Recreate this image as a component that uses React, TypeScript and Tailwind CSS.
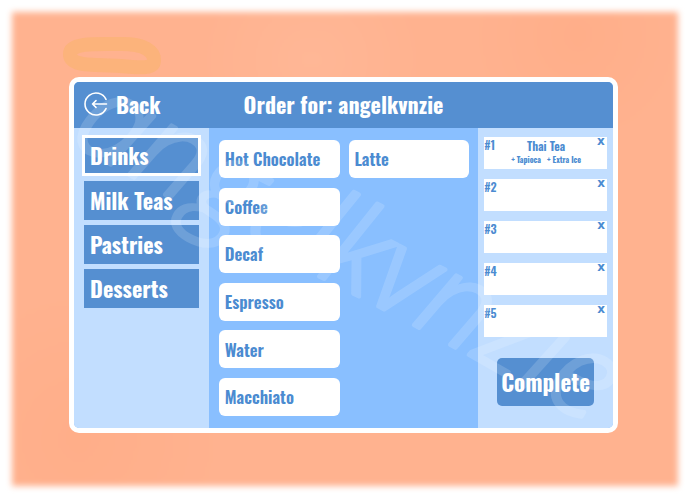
import { useState } from 'react';

interface OrderItem {
  name: string;
  extras: string[];
}

const categories = ['Drinks', 'Milk Teas', 'Pastries', 'Desserts'];

const menu = ['Hot Chocolate', 'Coffee', 'Decaf', 'Espresso', 'Water', 'Macchiato', 'Latte'];

const initialOrder: (OrderItem | null)[] = [
  { name: 'Thai Tea', extras: ['Tapioca', 'Extra Ice'] },
  null,
  null,
  null,
  null,
];

function BackIcon() {
  return (
    <svg viewBox="0 0 24 24" className="size-6" fill="none" stroke="currentColor" strokeWidth="1.6" strokeLinecap="round" strokeLinejoin="round" aria-hidden="true">
      <path d="M22 7.4A11 11 0 1 0 22 16.6" />
      <path d="M22.5 12H8.5M12 8.6 8.5 12l3.5 3.4" />
    </svg>
  );
}

function Signature() {
  return (
    <svg viewBox="0 0 690 498" className="pointer-events-none absolute inset-0 h-full w-full" aria-hidden="true">
      <path
        d="M70 54C70 42 100 44 122 44S154 51 154 60S142 68 120 66S70 68 70 54Z"
        fill="none"
        stroke="#f8b35c"
        strokeOpacity="0.4"
        strokeWidth="14"
        strokeLinecap="round"
      />
      <defs>
        <path id="signature-line" d="M68 140Q210 222 350 292T680 480" />
      </defs>
      <text
        fill="white"
        stroke="white"
        strokeWidth="4"
        strokeLinejoin="round"
        opacity="0.15"
        fontSize="120"
        fontStyle="italic"
        fontWeight="300"
        fontFamily="'Open Sans', sans-serif"
      >
        <textPath href="#signature-line">angelkvnzie</textPath>
      </text>
    </svg>
  );
}

export default function App() {
  const [category, setCategory] = useState('Drinks');
  const [order, setOrder] = useState(initialOrder);

  const removeItem = (index: number) => {
    setOrder(order.map((item, i) => (i === index ? null : item)));
  };

  return (
    <main className="relative flex min-h-screen overflow-hidden bg-white pt-[77px] pr-[72px] pb-[65px] pl-[69px] font-['Oswald','Liberation_Sans_Narrow','Roboto_Condensed','Liberation_Sans',sans-serif] font-bold">
      <div className="absolute inset-3 bg-[#ffb28f] bg-[radial-gradient(circle_at_85%_5%,#ffae89,transparent_15%),radial-gradient(circle_at_10%_90%,#ffae89,transparent_20%),radial-gradient(circle_at_45%_10%,#ffb796,transparent_20%)] blur-[3px]" />

      <div className="relative flex flex-1 flex-col overflow-hidden rounded-[10px] border-[5px] border-white bg-[#89bfff]">
        <header className="relative flex h-[46px] items-center justify-center bg-[#558fd1] pb-[2px] text-[22px] text-white">
          <button type="button" className="absolute left-[10px] flex items-center gap-2">
            <BackIcon />
            Back
          </button>
          <h1>Order for: angelkvnzie</h1>
        </header>

        <div className="flex flex-1">
          <nav className="flex w-1/4 flex-col gap-[5px] bg-[#c2deff] px-2 pt-[7px]">
            {categories.map(name => (
              <button
                key={name}
                type="button"
                onClick={() => setCategory(name)}
                className={`bg-[#558fd1] pb-[2px] text-left text-[22px] leading-8 text-white ${
                  name === category ? 'h-[41px] border-[3px] border-white pl-[5px]' : 'mx-[2px] h-[39px] pl-[6px]'
                }`}
              >
                {name}
              </button>
            ))}
          </nav>

          <section className="grid flex-1 grid-flow-col grid-cols-2 grid-rows-[repeat(6,38px)] content-between gap-x-[9px] py-3 pr-[9px] pl-[10px]">
            {menu.map(name => (
              <button key={name} type="button" className="rounded-md bg-white pl-[6px] text-left text-[17px] font-semibold text-[#4b8bd1]">
                {name}
              </button>
            ))}
          </section>

          <aside className="flex w-1/4 flex-col bg-[#c2deff] px-[6px] pt-[9px] text-[#4b8bd1]">
            <ol className="flex flex-col gap-[10px]">
              {order.map((item, i) => (
                <li key={i} className="flex h-8 justify-between bg-white pr-px">
                  <span className="w-3 text-xs leading-4 font-semibold">#{i + 1}</span>
                  {item && (
                    <div className="flex flex-col items-center whitespace-nowrap">
                      <span className="text-xs leading-[18px] font-semibold">{item.name}</span>
                      <span className="flex gap-[6px] text-[8px] leading-[8px]">
                        {item.extras.map(extra => (
                          <span key={extra}>+ {extra}</span>
                        ))}
                      </span>
                    </div>
                  )}
                  <button
                    type="button"
                    onClick={() => removeItem(i)}
                    aria-label={`Remove item ${i + 1}`}
                    className="flex h-[9px] w-[10px] items-end justify-center font-['DejaVu_Sans',sans-serif] text-xs leading-[9px]"
                  >
                    x
                  </button>
                </li>
              ))}
            </ol>
            <button type="button" className="mx-auto mt-[21px] h-12 w-[97px] rounded-[5px] bg-[#558fd1] text-[23px] text-white">
              Complete
            </button>
          </aside>
        </div>
      </div>

      <Signature />
    </main>
  );
}
